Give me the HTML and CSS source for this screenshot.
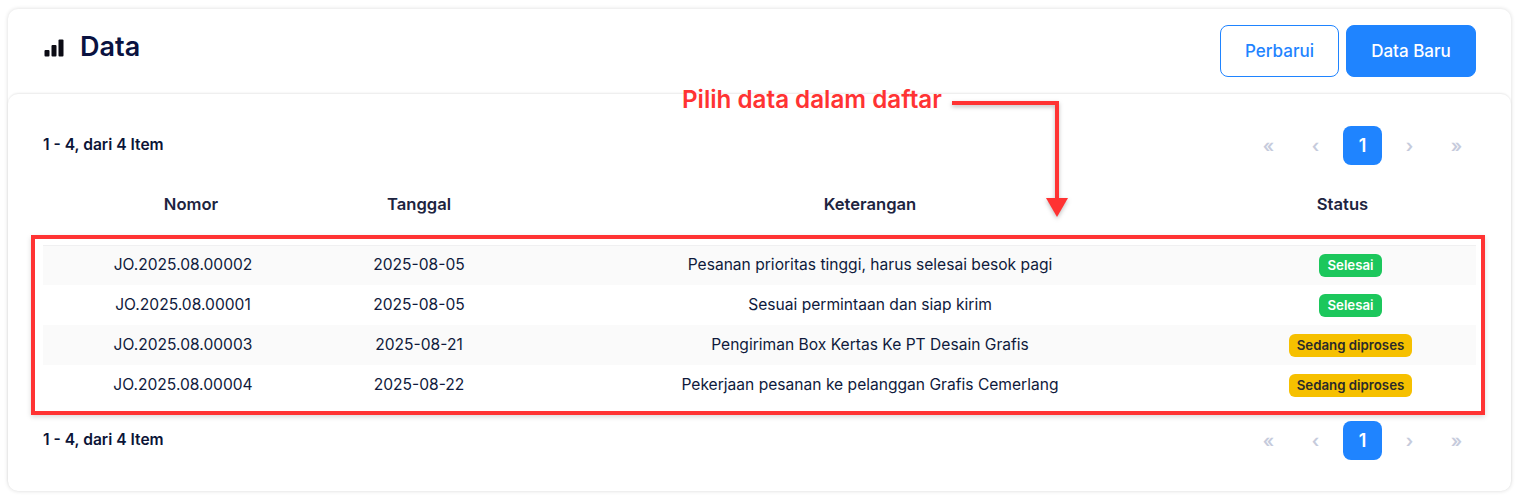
FILE: index.html
```html
<!DOCTYPE html>
<html lang="id">
<head>
<meta charset="utf-8">
<title>Data</title>
<link rel="stylesheet" href="styles.css">
</head>
<body>
<main class="page">
  <section class="card">
    <header class="card-head">
      <h1 class="title">
        <svg class="title-icon" viewBox="0 0 20 18" width="20" height="18" aria-hidden="true">
          <rect x="0.5" y="11" width="5" height="6.5" rx="1"/>
          <rect x="7.5" y="6" width="5" height="11.5" rx="1"/>
          <rect x="14.5" y="0.5" width="5" height="17" rx="1"/>
        </svg>
        Data
      </h1>
      <div class="actions">
        <button class="btn btn-outline">Perbarui</button>
        <button class="btn btn-solid">Data Baru</button>
      </div>
    </header>
    <div class="card-body">
      <div class="bar bar-top">
        <span class="count">1 - 4, dari 4 Item</span>
        <nav class="pager">
          <span class="pg">«</span><span class="pg">‹</span><span class="pg pg-active">1</span><span class="pg">›</span><span class="pg">»</span>
        </nav>
      </div>
      <table class="grid">
        <colgroup><col class="c1"><col class="c2"><col class="c3"><col class="c4"></colgroup>
        <thead>
          <tr><th>Nomor</th><th>Tanggal</th><th>Keterangan</th><th>Status</th></tr>
        </thead>
        <tbody>
          <tr><td>JO.2025.08.00002</td><td>2025-08-05</td><td>Pesanan prioritas tinggi, harus selesai besok pagi</td><td><span class="badge done">Selesai</span></td></tr>
          <tr><td>JO.2025.08.00001</td><td>2025-08-05</td><td>Sesuai permintaan dan siap kirim</td><td><span class="badge done">Selesai</span></td></tr>
          <tr><td>JO.2025.08.00003</td><td>2025-08-21</td><td>Pengiriman Box Kertas Ke PT Desain Grafis</td><td><span class="badge busy">Sedang diproses</span></td></tr>
          <tr><td>JO.2025.08.00004</td><td>2025-08-22</td><td>Pekerjaan pesanan ke pelanggan Grafis Cemerlang</td><td><span class="badge busy">Sedang diproses</span></td></tr>
        </tbody>
      </table>
      <div class="bar bar-bottom">
        <span class="count">1 - 4, dari 4 Item</span>
        <nav class="pager">
          <span class="pg">«</span><span class="pg">‹</span><span class="pg pg-active">1</span><span class="pg">›</span><span class="pg">»</span>
        </nav>
      </div>
    </div>
  </section>

  <div class="note-frame"></div>
  <div class="note-text">Pilih data dalam daftar</div>
  <svg class="note-arrow" viewBox="0 0 130 130" width="130" height="130" aria-hidden="true">
    <path d="M2 5 H107 V100" fill="none" stroke="#ff3333" stroke-width="4"/>
    <path d="M96 100 H118 L107 119 Z" fill="#ff3333"/>
  </svg>
</main>
</body>
</html>
```
FILE: styles.css
```css
* { box-sizing: border-box; }
html, body { margin: 0; height: 100%; }
body {
  background: #fff;
  color: #0b1437;
  font-family: Inter, "Liberation Sans", sans-serif;
  overflow: hidden;
}
.page {
  position: relative;
  width: 1518px;
  height: 502px;
  padding: 9px 7px 11px 8px;
}
.card {
  height: 482px;
  background: #fff;
  border-radius: 10px;
  box-shadow: 0 0 4px rgba(0, 0, 0, .15);
  display: flex;
  flex-direction: column;
}
.card-head {
  height: 85px;
  padding: 16px 35px 0 36px;
  display: flex;
  justify-content: space-between;
  align-items: flex-start;
}
.title {
  margin: 0;
  padding-top: 4px;
  display: flex;
  align-items: center;
  gap: 16px;
  font-size: 27px;
  line-height: 36px;
  font-weight: 600;
  color: #0a1240;
}
.title-icon { fill: #0b0b14; margin-top: 2px; }
.actions { display: flex; gap: 7px; }
.btn {
  height: 52px;
  border-radius: 8px;
  font: 500 17px Inter, "Liberation Sans", sans-serif;
  border: 1px solid #1f84ff;
}
.btn-outline { width: 119px; background: #fff; color: #1f84ff; }
.btn-solid { width: 130px; background: #1f84ff; color: #fff; }
.card-body {
  flex: 1;
  padding: 0 35px;
  border-radius: 10px;
  box-shadow: 0 -1px 2px rgba(0, 0, 0, .09);
}
.bar {
  display: flex;
  justify-content: space-between;
  align-items: center;
  height: 39px;
}
.bar-top { margin-top: 32px; }
.bar-bottom { margin-top: 16px; }
.count {
  padding-bottom: 2px;
  font-size: 15.6px;
  font-weight: 600;
  color: #0b1437;
}
.pager { display: flex; gap: 8px; }
.pg {
  width: 39px;
  height: 39px;
  display: flex;
  align-items: center;
  justify-content: center;
  color: #c6cbdc;
  font-size: 18px;
  font-weight: 600;
  border-radius: 8px;
}
.pg-active { background: #1f84ff; color: #fff; }
.grid {
  width: 1433px;
  border-collapse: collapse;
  table-layout: fixed;
  font-size: 15.6px;
}
.c1 { width: 280px; }
.c2 { width: 192px; }
.c3 { width: 710px; }
.c4 { width: 251px; }
th {
  height: 80px;
  padding: 0 0 2px;
  font-size: 16.6px;
  font-weight: 600;
  color: #1d2440;
  text-align: center;
  border-bottom: 1px solid #f0f0f1;
}
th:first-child { padding-left: 16px; }
th:last-child { padding-right: 16px; }
td {
  height: 40px;
  padding: 0 0 2px;
  text-align: center;
  color: #0f1a3c;
}
td:last-child { padding: 0; }
tbody tr:nth-child(odd) { background: #fafafa; }
.badge {
  display: inline-block;
  height: 23px;
  line-height: 22px;
  padding: 0 8px;
  border-radius: 6px;
  font-size: 13.25px;
  font-weight: 600;
  vertical-align: middle;
}
.done { background: #1cc75c; color: #fff; }
.busy { background: #f6c000; color: #2a2a2a; }
.note-frame {
  position: absolute;
  left: 31px;
  top: 235px;
  width: 1454px;
  height: 180px;
  border: 4px solid #ff3333;
  box-shadow: 0 2px 5px rgba(0, 0, 0, .15);
}
.note-text {
  position: absolute;
  left: 682px;
  top: 86px;
  font-size: 24.2px;
  line-height: 28px;
  font-weight: 600;
  color: #ff3333;
  white-space: nowrap;
}
.note-arrow {
  position: absolute;
  left: 950px;
  top: 98px;
  filter: drop-shadow(0 2px 2px rgba(0, 0, 0, .25));
}
```
